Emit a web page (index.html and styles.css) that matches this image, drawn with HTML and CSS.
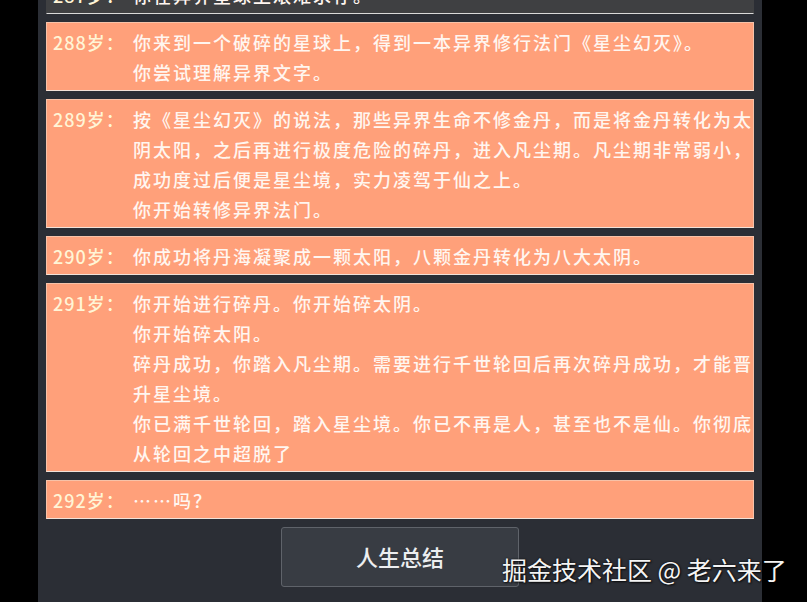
FILE: index.html
```html
<!DOCTYPE html>
<html lang="zh-CN">
<head>
    <meta charset="UTF-8">
    <meta name="viewport" content="width=device-width, initial-scale=1.0">
    <title>人生重开</title>
    <link rel="stylesheet" href="styles.css">
</head>
<body>

<div class="panel">
    <div class="log">
        <div class="entry past">
            <span class="age">287岁：</span>
            <div class="text"><p>你在异界星球上艰难求存。</p></div>
        </div>

        <div class="entry">
            <span class="age">288岁：</span>
            <div class="text">
                <p>你来到一个破碎的星球上，得到一本异界修行法门《星尘幻灭》。</p>
                <p>你尝试理解异界文字。</p>
            </div>
        </div>

        <div class="entry">
            <span class="age">289岁：</span>
            <div class="text">
                <p>按《星尘幻灭》的说法，那些异界生命不修金丹，而是将金丹转化为太阴太阳，之后再进行极度危险的碎丹，进入凡尘期。凡尘期非常弱小，成功度过后便是星尘境，实力凌驾于仙之上。</p>
                <p>你开始转修异界法门。</p>
            </div>
        </div>

        <div class="entry">
            <span class="age">290岁：</span>
            <div class="text">
                <p>你成功将丹海凝聚成一颗太阳，八颗金丹转化为八大太阴。</p>
            </div>
        </div>

        <div class="entry">
            <span class="age">291岁：</span>
            <div class="text">
                <p>你开始进行碎丹。你开始碎太阴。</p>
                <p>你开始碎太阳。</p>
                <p>碎丹成功，你踏入凡尘期。需要进行千世轮回后再次碎丹成功，才能晋升星尘境。</p>
                <p>你已满千世轮回，踏入星尘境。你已不再是人，甚至也不是仙。你彻底从轮回之中超脱了</p>
            </div>
        </div>

        <div class="entry">
            <span class="age">292岁：</span>
            <div class="text">
                <p>……吗？</p>
            </div>
        </div>
    </div>

    <div class="actions">
        <button class="summary-btn">人生总结</button>
    </div>
</div>

<div class="watermark">掘金技术社区 @ 老六来了</div>

</body>
</html>
```

FILE: styles.css
```css
body {
    margin: 0;
    padding: 0;
    background-color: #000;
    font-family: "Noto Sans CJK SC", "Noto Sans", sans-serif;
    height: 602px;
    overflow: hidden;
    position: relative;
}

.panel {
    width: 724px;
    height: 602px;
    margin-left: 38px;
    background-color: #2b2e35;
    overflow: hidden;
}

.log {
    margin-top: -25px;
    padding: 0 8px;
}

.entry {
    display: flex;
    margin-bottom: 8px;
    padding: 4px 0 3px 6px;
    background-color: #ffa07a;
    border: 1px solid #f7c2a8;
    border-bottom-color: #f3e2d8;
    font-size: 18px;
    font-weight: 500;
    line-height: 30px;
    color: #fff6f0;
    overflow: hidden;
}

.entry.past {
    background-color: #3f4042;
    border-color: #3f4042;
    border-bottom-color: #d9d9d9;
}

.age {
    flex: none;
    width: 80px;
    letter-spacing: 1px;
    color: #fff5d6;
}

.text {
    flex: none;
    width: 628px;
    letter-spacing: 2px;
}

.text p {
    margin: 0;
}

.actions {
    display: flex;
    justify-content: center;
}

.summary-btn {
    width: 238px;
    height: 60px;
    padding-bottom: 4px;
    background-color: #383c43;
    border: 1px solid #5f636a;
    border-radius: 3px;
    color: #eceef0;
    font-family: inherit;
    font-size: 22px;
    font-weight: 500;
    cursor: pointer;
}

.summary-btn:hover {
    background-color: #41454c;
}

.watermark {
    position: absolute;
    left: 502px;
    top: 554px;
    font-size: 25px;
    line-height: 30px;
    color: #f4f4f4;
    white-space: nowrap;
    text-shadow: 0 0 2px rgba(0, 0, 0, 0.9), 1px 1px 2px rgba(0, 0, 0, 0.7);
}
```
